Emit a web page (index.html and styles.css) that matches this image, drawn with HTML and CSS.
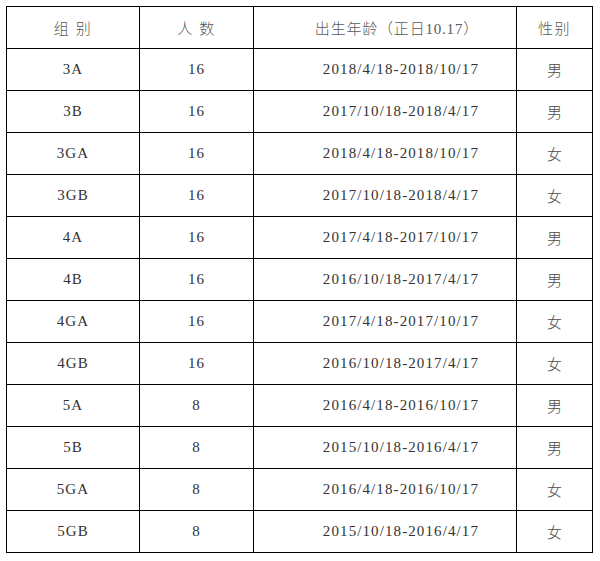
FILE: index.html
```html
<!DOCTYPE html>
<html lang="zh-CN">
<head>
<meta charset="utf-8">
<link rel="stylesheet" href="styles.css">
</head>
<body>
<table class="roster">
  <colgroup>
    <col class="c-group"><col class="c-count"><col class="c-birth"><col class="c-sex">
  </colgroup>
  <thead>
    <tr><th>组 别</th><th>人 数</th><th class="birth">出生年龄（正日10.17）</th><th>性别</th></tr>
  </thead>
  <tbody>
    <tr><td>3A</td><td>16</td><td class="birth">2018/4/18-2018/10/17</td><td class="sex">男</td></tr>
    <tr><td>3B</td><td>16</td><td class="birth">2017/10/18-2018/4/17</td><td class="sex">男</td></tr>
    <tr><td>3GA</td><td>16</td><td class="birth">2018/4/18-2018/10/17</td><td class="sex">女</td></tr>
    <tr><td>3GB</td><td>16</td><td class="birth">2017/10/18-2018/4/17</td><td class="sex">女</td></tr>
    <tr><td>4A</td><td>16</td><td class="birth">2017/4/18-2017/10/17</td><td class="sex">男</td></tr>
    <tr><td>4B</td><td>16</td><td class="birth">2016/10/18-2017/4/17</td><td class="sex">男</td></tr>
    <tr><td>4GA</td><td>16</td><td class="birth">2017/4/18-2017/10/17</td><td class="sex">女</td></tr>
    <tr><td>4GB</td><td>16</td><td class="birth">2016/10/18-2017/4/17</td><td class="sex">女</td></tr>
    <tr><td>5A</td><td>8</td><td class="birth">2016/4/18-2016/10/17</td><td class="sex">男</td></tr>
    <tr><td>5B</td><td>8</td><td class="birth">2015/10/18-2016/4/17</td><td class="sex">男</td></tr>
    <tr><td>5GA</td><td>8</td><td class="birth">2016/4/18-2016/10/17</td><td class="sex">女</td></tr>
    <tr><td>5GB</td><td>8</td><td class="birth">2015/10/18-2016/4/17</td><td class="sex">女</td></tr>
  </tbody>
</table>
</body>
</html>
```

FILE: styles.css
```css
html, body {
  margin: 0;
  padding: 0;
  background: #ffffff;
}
body {
  padding: 6px 0 0 6px;
  font-family: "Liberation Serif", "Noto Sans CJK SC", serif;
  font-size: 15px;
  color: #333333;
}
.roster {
  border-collapse: collapse;
  table-layout: fixed;
  width: 586px;
}
.c-group { width: 133px; }
.c-count { width: 114px; }
.c-birth { width: 263px; }
.c-sex { width: 76px; }
.roster th,
.roster td {
  border: 1px solid #000000;
  height: 41px;
  padding: 0;
  text-align: center;
  vertical-align: middle;
  letter-spacing: 1.1px;
}
.roster th {
  font-weight: 300;
  color: #5a5a5a;
  font-size: 15px;
  letter-spacing: 1.6px;
}
.roster .birth {
  text-align: right;
  padding-right: 37px;
}
.roster th.birth {
  letter-spacing: 0.8px;
}
.roster .sex {
  font-weight: 300;
  color: #4a4a4a;
  letter-spacing: 0;
}
```
